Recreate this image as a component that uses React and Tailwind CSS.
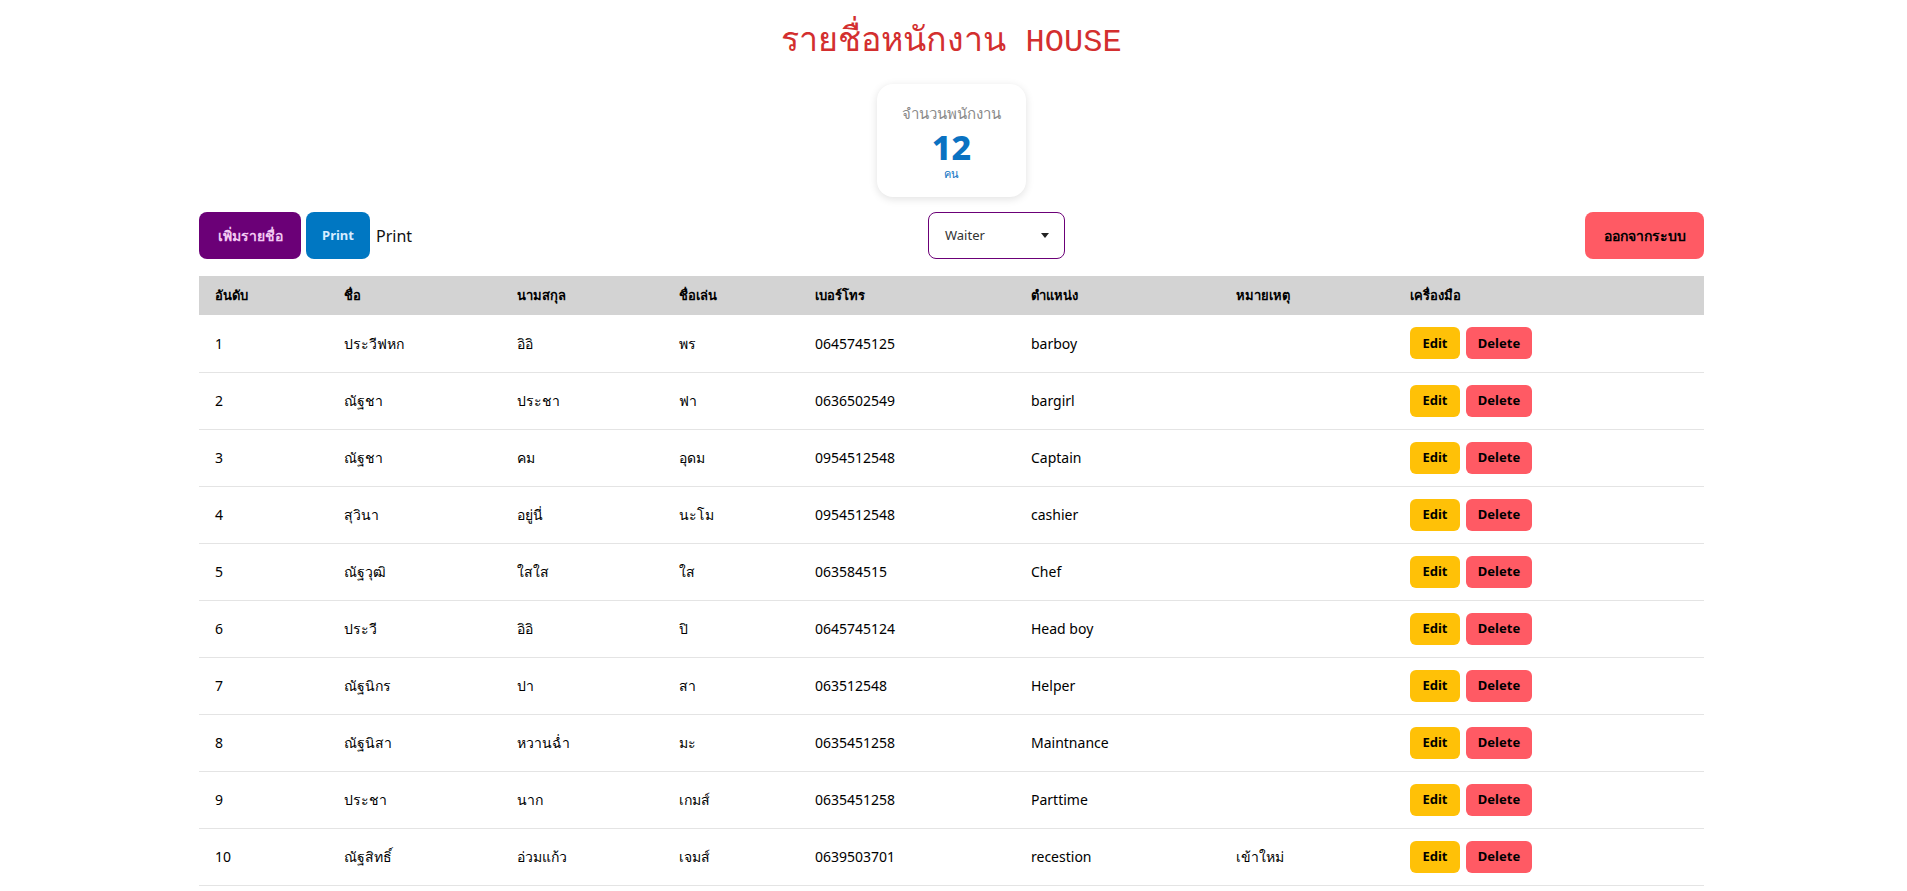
import { useState } from 'react'

const EMPLOYEES = [
  { id: 1, name: 'ประวีฟหก', last: 'อิอิ', nick: 'พร', phone: '0645745125', pos: 'barboy', note: '' },
  { id: 2, name: 'ณัฐชา', last: 'ประชา', nick: 'ฟา', phone: '0636502549', pos: 'bargirl', note: '' },
  { id: 3, name: 'ณัฐชา', last: 'คม', nick: 'อุดม', phone: '0954512548', pos: 'Captain', note: '' },
  { id: 4, name: 'สุวินา', last: 'อยู่นี่', nick: 'นะโม', phone: '0954512548', pos: 'cashier', note: '' },
  { id: 5, name: 'ณัฐวุฒิ', last: 'ใสใส', nick: 'ใส', phone: '063584515', pos: 'Chef', note: '' },
  { id: 6, name: 'ประวี', last: 'อิอิ', nick: 'ปิ', phone: '0645745124', pos: 'Head boy', note: '' },
  { id: 7, name: 'ณัฐนิกร', last: 'ปา', nick: 'สา', phone: '063512548', pos: 'Helper', note: '' },
  { id: 8, name: 'ณัฐนิสา', last: 'หวานฉ่ำ', nick: 'มะ', phone: '0635451258', pos: 'Maintnance', note: '' },
  { id: 9, name: 'ประชา', last: 'นาก', nick: 'เกมส์', phone: '0635451258', pos: 'Parttime', note: '' },
  { id: 10, name: 'ณัฐสิทธิ์', last: 'อ่วมแก้ว', nick: 'เจมส์', phone: '0639503701', pos: 'recestion', note: 'เข้าใหม่' },
]

const HEADERS = ['อันดับ', 'ชื่อ', 'นามสกุล', 'ชื่อเล่น', 'เบอร์โทร', 'ตำแหน่ง', 'หมายเหตุ', 'เครื่องมือ']

export default function App() {
  const [position] = useState('Waiter')

  return (
    <div className="min-h-screen bg-white text-black font-['Noto_Sans',sans-serif]">
      <div className="w-[1505px] ml-[199px]">
        {/* ─── TITLE ─── */}
        <h1 className="text-center text-[32px] leading-[40px] pt-[22px] text-[#d32f2f] font-['Liberation_Mono',monospace]">
          <span className="text-[34px]">รายชื่อหนักงาน</span> HOUSE
        </h1>

        {/* ─── COUNT CARD ─── */}
        <div className="flex justify-center mt-[21px]">
          <div className="w-[149px] h-[113px] rounded-2xl bg-white shadow-[0_2px_8px_rgba(0,0,0,0.12)] flex flex-col items-center pt-[19px]">
            <span className="text-[15px] leading-[20px] text-[#8a8a8a]">จำนวนพนักงาน</span>
            <span className="text-[34px] leading-[34px] font-extrabold text-[#0a72c2] mt-[7px]">12</span>
            <span className="text-[11px] leading-[14px] text-[#0a72c2] mt-[3px]">คน</span>
          </div>
        </div>

        {/* ─── TOOLBAR ─── */}
        <div className="flex items-center justify-between mt-[15px]">
          <div className="flex items-center gap-[5px] w-[300px]">
            <button className="w-[102px] h-[47px] rounded-lg bg-[#6b0077] text-[#f2c9f2] text-[14px] font-bold">
              เพิ่มรายชื่อ
            </button>
            <button className="w-[64px] h-[47px] rounded-lg bg-[#0077c2] text-[#d6ecff] text-[13px] font-bold">
              Print
            </button>
            <span className="text-[16px] ml-[1px] text-[#111]">Print</span>
          </div>
          <div className="w-[137px] h-[47px] rounded-lg border border-[#6b0077] flex items-center justify-between pl-[16px] pr-[15px] ml-[90px]">
            <span className="text-[13px] text-[#333]">{position}</span>
            <svg width="8" height="5" viewBox="0 0 8 5"><path d="M0 0h8L4 5z" fill="#222" /></svg>
          </div>
          <div className="w-[300px] flex justify-end">
            <button className="w-[119px] h-[47px] rounded-lg bg-[#ff5a64] text-black text-[14px] font-bold">
              ออกจากระบบ
            </button>
          </div>
        </div>

        {/* ─── TABLE ─── */}
        <table className="w-full table-fixed border-collapse mt-[17px] text-[14px]">
          <colgroup>
            <col className="w-[129px]" />
            <col className="w-[173px]" />
            <col className="w-[162px]" />
            <col className="w-[136px]" />
            <col className="w-[216px]" />
            <col className="w-[205px]" />
            <col className="w-[174px]" />
            <col />
          </colgroup>
          <thead>
            <tr className="bg-[#d3d3d3] h-[39px]">
              {HEADERS.map(h => (
                <th key={h} className="text-left px-4 text-[13px] font-bold">{h}</th>
              ))}
            </tr>
          </thead>
          <tbody>
            {EMPLOYEES.map(e => (
              <tr key={e.id} className="h-[57px] border-b border-[#e4e4e4]">
                <td className="px-4">{e.id}</td>
                <td className="px-4">{e.name}</td>
                <td className="px-4">{e.last}</td>
                <td className="px-4">{e.nick}</td>
                <td className="px-4">{e.phone}</td>
                <td className="px-4">{e.pos}</td>
                <td className="px-4">{e.note}</td>
                <td className="px-4">
                  <div className="flex gap-[6px]">
                    <button className="w-[50px] h-[32px] rounded-md bg-[#ffc107] text-[13px] font-bold">Edit</button>
                    <button className="w-[66px] h-[32px] rounded-md bg-[#ff5a64] text-[13px] font-bold">Delete</button>
                  </div>
                </td>
              </tr>
            ))}
          </tbody>
        </table>
      </div>
    </div>
  )
}
